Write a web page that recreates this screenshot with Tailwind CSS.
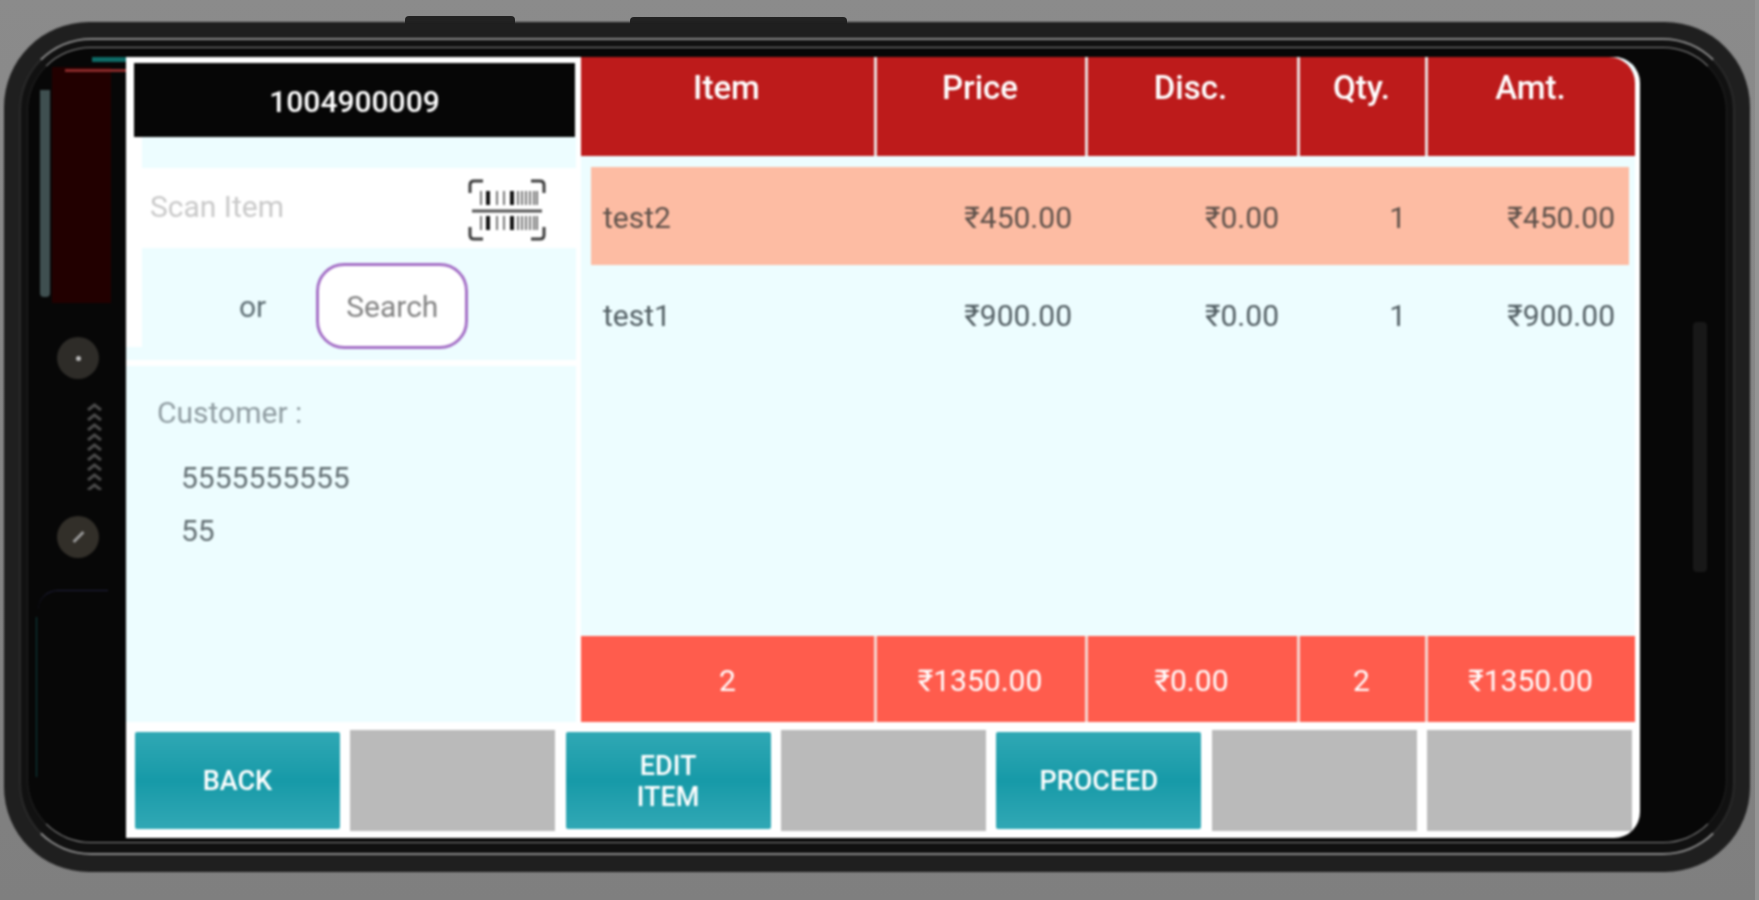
<!DOCTYPE html>
<html>
  <head>
    <title>POS</title>
    <script src="https://cdn.jsdelivr.net/npm/@tailwindcss/browser@4"></script>
  </head>
  <body class="relative h-[900px] overflow-hidden bg-linear-to-b from-[#8b8b8b] to-[#7f7f7f] font-[Roboto,sans-serif]">

    <div class="absolute right-0 top-0 h-full w-[4px] bg-[#949494]"></div>

    <!-- phone buttons on top edge -->
    <div class="absolute left-[405px] top-[16px] h-[8px] w-[110px] rounded-t bg-[#222]"></div>
    <div class="absolute left-[630px] top-[17px] h-[7px] w-[217px] rounded-t bg-[#222]"></div>

    <!-- phone -->
    <div class="relative ml-[4px] mt-[22px] h-[850px] w-[1746px] rounded-[85px] bg-[#1f1f1f] px-[15px] pb-[17px] pt-[16px] blur-[0.8px]">
      <div class="h-full rounded-[72px] border-2 border-x-[#2a2a2a] border-y-[#8a8a8a] bg-[#111] px-[6px] pb-[10px] pt-[7px]">
        <div class="relative flex h-full rounded-[64px] border border-x-[#222] border-y-[#8a8a8a] bg-[#070707] pb-[4px] pl-[98px] pr-[86px] pt-[9px]">

          <!-- things in the bezel, left of the screen -->
          <div class="absolute left-[24px] top-[19px] h-[236px] w-[59px] bg-[#220000]"></div>
          <div class="absolute left-[12px] top-[42px] h-[207px] w-[10px] rounded-b bg-[#3f4f50]"></div>
          <div class="absolute left-[37px] top-[21px] h-[3px] w-[61px] bg-[#8a2a2a]"></div>
          <div class="absolute left-[64px] top-[9px] h-[5px] w-[34px] bg-[#0f6a66]"></div>
          <div class="absolute left-[29px] top-[289px] flex size-[42px] items-center justify-center rounded-full bg-[#2e2c28]">
            <div class="size-[5px] rounded-full bg-[#bbb]"></div>
          </div>
          <div class="absolute left-[29px] top-[468px] flex size-[42px] items-center justify-center rounded-full bg-[#322f29]">
            <div class="h-[14px] w-[3px] rotate-45 bg-[#999]"></div>
          </div>
          <svg class="absolute left-[58px] top-[355px]" width="17" height="87" viewBox="0 0 17 87" fill="none" stroke="#4a4a4a" stroke-width="3">
            <path d="M2 7L8.5 2L15 7"/>
            <path d="M2 17L8.5 12L15 17"/>
            <path d="M2 27L8.5 22L15 27"/>
            <path d="M2 37L8.5 32L15 37"/>
            <path d="M2 47L8.5 42L15 47"/>
            <path d="M2 57L8.5 52L15 57"/>
            <path d="M2 67L8.5 62L15 67"/>
            <path d="M2 77L8.5 72L15 77"/>
            <path d="M2 87L8.5 82L15 87"/>
          </svg>
          <div class="absolute left-[10px] top-[542px] h-[20px] w-[70px] rounded-tl-[20px] border-t border-t-[#20203c]"></div>
          <div class="absolute left-[8px] top-[569px] h-[160px] w-px bg-[#0d3f40]"></div>

          <!-- screen -->
          <div class="flex w-full flex-col overflow-hidden rounded-r-[26px] bg-white">
            <div class="flex h-[665px]">

              <!-- left panel -->
              <div class="flex w-[450px] flex-col pt-[6px]">
                <div class="ml-[8px] mr-[1px] flex h-[74px] items-center justify-center bg-[#060606] pt-[3px] text-[30px] font-medium text-white">1004900009</div>
                <div class="ml-[16px] h-[31px] bg-[#edfdff]"></div>
                <div class="ml-[16px] flex h-[80px] items-center justify-between pl-[8px] pr-[30px]">
                  <span class="mb-[4px] text-[30px] text-[#c9c9c9]">Scan Item</span>
                  <svg class="mt-[4px]" width="78" height="62" viewBox="0 0 78 62" fill="none">
                    <g stroke="#3c3c3c" stroke-width="3">
                      <path d="M2 14V6Q2 2 6 2H15"/>
                      <path d="M63 2H72Q76 2 76 6V14"/>
                      <path d="M2 48V56Q2 60 6 60H15"/>
                      <path d="M63 60H72Q76 60 76 56V48"/>
                      <path d="M4 32H74" stroke="#555"/>
                    </g>
                    <g fill="#777">
                      <rect x="12" y="12" width="2" height="14"/>
                      <rect x="18" y="12" width="4" height="14" fill="#111"/>
                      <rect x="28" y="12" width="2" height="14"/>
                      <rect x="35" y="12" width="2" height="14"/>
                      <rect x="42" y="12" width="4" height="14" fill="#111"/>
                      <rect x="49" y="12" width="2" height="14"/>
                      <rect x="53" y="12" width="2" height="14"/>
                      <rect x="57" y="12" width="2" height="14"/>
                      <rect x="61" y="12" width="2" height="14"/>
                      <rect x="65" y="12" width="2" height="14"/>
                      <rect x="68" y="12" width="2" height="14"/>
                      <rect x="12" y="37" width="2" height="14"/>
                      <rect x="18" y="37" width="4" height="14" fill="#111"/>
                      <rect x="28" y="37" width="2" height="14"/>
                      <rect x="35" y="37" width="2" height="14"/>
                      <rect x="42" y="37" width="4" height="14" fill="#111"/>
                      <rect x="49" y="37" width="2" height="14"/>
                      <rect x="53" y="37" width="2" height="14"/>
                      <rect x="57" y="37" width="2" height="14"/>
                      <rect x="61" y="37" width="2" height="14"/>
                      <rect x="65" y="37" width="2" height="14"/>
                      <rect x="68" y="37" width="2" height="14"/>
                    </g>
                  </svg>
                </div>
                <div class="relative flex h-[112px] bg-[#edfdff] pt-[15px]">
                  <div class="absolute left-0 top-0 h-[99px] w-[16px] bg-white"></div>
                  <span class="ml-[113px] mt-[27px] text-[30px] leading-[34px] text-[#5f6f75]">or</span>
                  <div class="ml-[50px] flex h-[86px] w-[152px] items-center justify-center rounded-[28px] border-[3px] border-[#a46fc6] bg-white text-[30px] text-[#848484]">Search</div>
                </div>
                <div class="mt-[6px] flex-1 bg-[#edfdff] pl-[31px] pt-[30px]">
                  <div class="text-[30px] leading-[34px] text-[#8f9ca1]">Customer :</div>
                  <div class="ml-[24px] mt-[21px] text-[30px] leading-[53px] text-[#636f73]">
                    <div>5555555555</div>
                    <div>55</div>
                  </div>
                </div>
              </div>

              <!-- table -->
              <div class="ml-[5px] flex w-[1054px] flex-col bg-[#edfdff]">
                <div class="grid h-[99px] grid-cols-[296px_211px_212px_128px_207px] rounded-tr-[26px] bg-[#bd1b1b] text-[33px] font-medium leading-[62px] text-white">
                  <div class="border-r-[3px] border-[#eadcdc] pr-[2px] text-center">Item</div>
                  <div class="border-r-[3px] border-[#eadcdc] pr-[2px] text-center">Price</div>
                  <div class="border-r-[3px] border-[#eadcdc] pr-[4px] text-center">Disc.</div>
                  <div class="border-r-[3px] border-[#eadcdc] pr-[2px] text-center">Qty.</div>
                  <div class="pr-[2px] text-center">Amt.</div>
                </div>
                <div class="flex-1 px-[10px] pr-[6px] pt-[11px] text-[30px]">
                  <div class="grid h-[98px] grid-cols-[286px_210px_212px_128px_202px] items-center bg-[#fdbca3] pt-[3px] text-[#5e514a]">
                    <div class="pl-[12px]">test2</div>
                    <div class="pr-[15px] text-right">₹450.00</div>
                    <div class="pr-[20px] text-right">₹0.00</div>
                    <div class="pr-[21px] text-right">1</div>
                    <div class="pr-[14px] text-right">₹450.00</div>
                  </div>
                  <div class="grid h-[99px] grid-cols-[286px_210px_212px_128px_202px] items-center pt-[2px] text-[#525e63]">
                    <div class="pl-[12px]">test1</div>
                    <div class="pr-[15px] text-right">₹900.00</div>
                    <div class="pr-[20px] text-right">₹0.00</div>
                    <div class="pr-[21px] text-right">1</div>
                    <div class="pr-[14px] text-right">₹900.00</div>
                  </div>
                </div>
                <div class="grid h-[86px] grid-cols-[296px_211px_212px_128px_207px] items-stretch bg-[#ff5c4d] text-[30px] text-white">
                  <div class="flex items-center justify-center border-r-[3px] border-[#f6d5d0] pt-[3px]">2</div>
                  <div class="flex items-center justify-center border-r-[3px] border-[#f6d5d0] pr-[2px] pt-[3px]">₹1350.00</div>
                  <div class="flex items-center justify-center border-r-[3px] border-[#f6d5d0] pr-[2px] pt-[3px]">₹0.00</div>
                  <div class="flex items-center justify-center border-r-[3px] border-[#f6d5d0] pr-[2px] pt-[3px]">2</div>
                  <div class="flex items-center justify-center pr-[2px] pt-[3px]">₹1350.00</div>
                </div>
              </div>
            </div>

            <!-- function keys -->
            <div class="grid flex-1 grid-cols-7 gap-[10.5px] pb-[7px] pl-[9px] pr-[8px] pt-[8px] text-center text-[27px] font-medium leading-[31px] text-white">
              <div class="my-[2px] flex items-center justify-center rounded-[2px] bg-linear-to-b from-[#2fa8b4] via-[#169aa8] to-[#30a8b5] pt-[2px]">BACK</div>
              <div class="bg-[#bababa]"></div>
              <div class="my-[2px] flex items-center justify-center rounded-[2px] bg-linear-to-b from-[#2fa8b4] via-[#169aa8] to-[#30a8b5] pt-[2px]">EDIT<br>ITEM</div>
              <div class="bg-[#bababa]"></div>
              <div class="my-[2px] flex items-center justify-center rounded-[2px] bg-linear-to-b from-[#2fa8b4] via-[#169aa8] to-[#30a8b5] pt-[2px]">PROCEED</div>
              <div class="bg-[#bababa]"></div>
              <div class="bg-[#bababa]"></div>
            </div>
          </div>

          <!-- slot on the right side of the bezel -->
          <div class="absolute right-[19px] top-[274px] h-[250px] w-[14px] rounded bg-[#181818]"></div>
        </div>
      </div>
    </div>

  </body>
</html>
